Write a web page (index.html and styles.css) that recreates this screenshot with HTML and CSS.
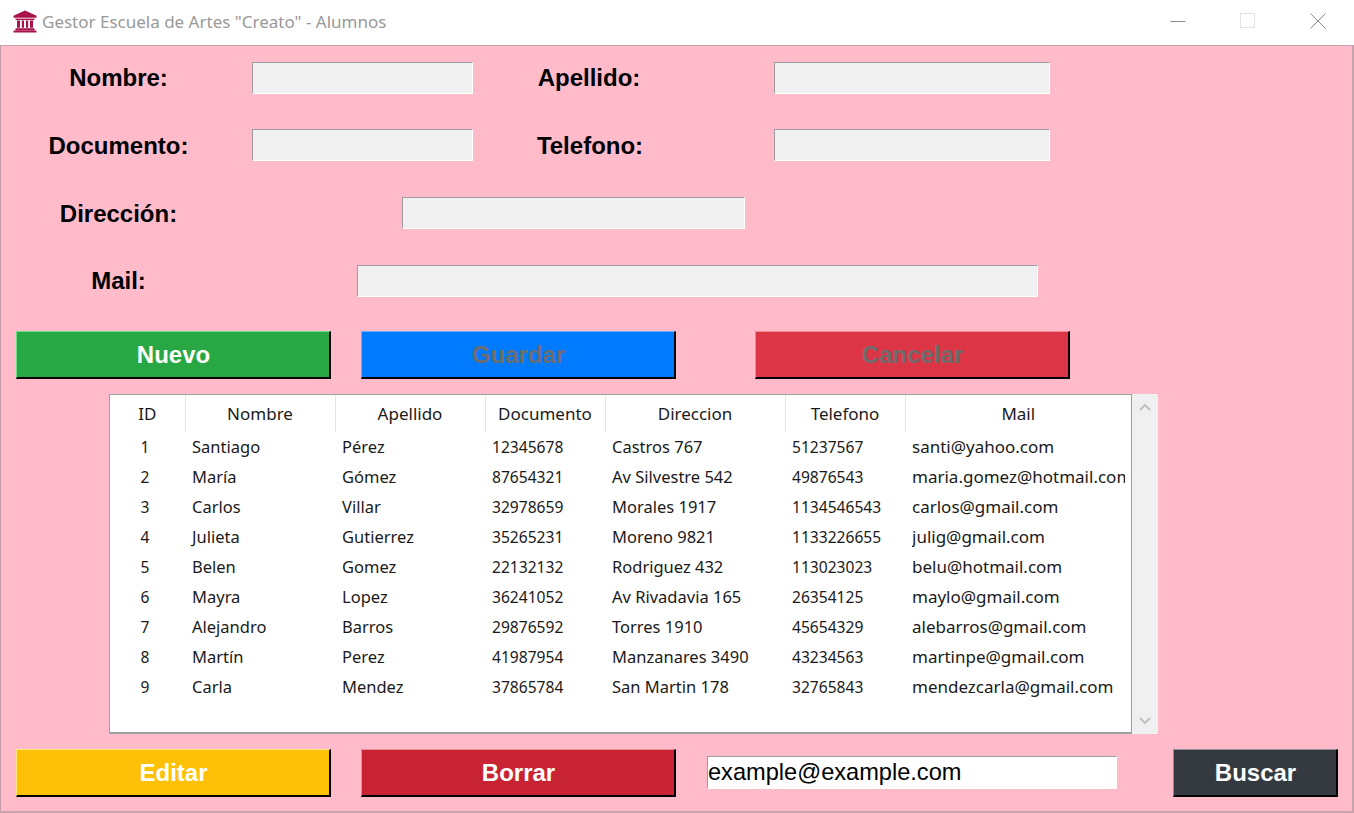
FILE: index.html
```html
<!DOCTYPE html>
<html lang="es">
<head>
<meta charset="utf-8">
<title>Gestor Escuela de Artes "Creato" - Alumnos</title>
<link rel="stylesheet" href="styles.css">
</head>
<body>
<div class="window">
  <header class="titlebar">
    <svg class="app-icon" viewBox="0 0 24 24" width="24" height="23" preserveAspectRatio="none" aria-hidden="true">
      <path d="M12 0.5 L23.5 6 V8 H0.5 V6 Z" fill="#a8144a"/>
      <path d="M2.5 9 H21.5 V10.5 H2.5 Z" fill="#a8144a"/>
      <path d="M4 11 H7 V18.5 H4 Z M8.8 11 H11 V18.5 H8.8 Z M13 11 H15.2 V18.5 H13 Z M17 11 H20 V18.5 H17 Z" fill="#a8144a"/>
      <path d="M2.5 19 H21.5 V21 H2.5 Z M0.5 21.3 H23.5 V23.5 H0.5 Z" fill="#a8144a"/>
    </svg>
    <span class="title">Gestor Escuela de Artes "Creato" - Alumnos</span>
    <div class="controls">
      <svg class="ctl ctl-min" viewBox="0 0 16 16" width="16" height="16" aria-hidden="true"><path d="M0.5 8.5 H15.5" stroke="#8a8a8a" stroke-width="1"/></svg>
      <svg class="ctl ctl-max" viewBox="0 0 16 16" width="16" height="16" aria-hidden="true"><rect x="0.5" y="0.5" width="14" height="14" fill="none" stroke="#e2e2e2"/></svg>
      <svg class="ctl ctl-close" viewBox="0 0 16 16" width="16" height="16" aria-hidden="true"><path d="M0.5 0.5 L15.5 15.5 M15.5 0.5 L0.5 15.5" stroke="#8a8a8a" stroke-width="1"/></svg>
    </div>
  </header>

  <main class="content">
    <div class="row row-1">
      <label class="label label-main">Nombre:</label>
      <input class="field field-short" type="text">
      <label class="label label-second">Apellido:</label>
      <input class="field field-second" type="text">
    </div>
    <div class="row row-2">
      <label class="label label-main">Documento:</label>
      <input class="field field-short" type="text">
      <label class="label label-second">Telefono:</label>
      <input class="field field-second" type="text">
    </div>
    <div class="row row-3">
      <label class="label label-main">Dirección:</label>
      <input class="field field-address" type="text">
    </div>
    <div class="row row-4">
      <label class="label label-main">Mail:</label>
      <input class="field field-mail" type="text">
    </div>

    <div class="actions actions-top">
      <button class="btn btn-green">Nuevo</button>
      <button class="btn btn-blue btn-off">Guardar</button>
      <button class="btn btn-red btn-off">Cancelar</button>
    </div>

    <div class="tree-wrap">
      <div class="tree">
        <table class="grid">
          <colgroup>
            <col class="c-id"><col class="c-name"><col class="c-name"><col class="c-doc"><col class="c-dir"><col class="c-doc"><col class="c-mail">
          </colgroup>
          <thead>
            <tr><th>ID</th><th>Nombre</th><th>Apellido</th><th>Documento</th><th>Direccion</th><th>Telefono</th><th>Mail</th></tr>
          </thead>
          <tbody>
            <tr><td>1</td><td>Santiago</td><td>Pérez</td><td>12345678</td><td>Castros 767</td><td>51237567</td><td><span class="clip">santi@yahoo.com</span></td></tr>
            <tr><td>2</td><td>María</td><td>Gómez</td><td>87654321</td><td>Av Silvestre 542</td><td>49876543</td><td><span class="clip">maria.gomez@hotmail.com</span></td></tr>
            <tr><td>3</td><td>Carlos</td><td>Villar</td><td>32978659</td><td>Morales 1917</td><td>1134546543</td><td><span class="clip">carlos@gmail.com</span></td></tr>
            <tr><td>4</td><td>Julieta</td><td>Gutierrez</td><td>35265231</td><td>Moreno 9821</td><td>1133226655</td><td><span class="clip">julig@gmail.com</span></td></tr>
            <tr><td>5</td><td>Belen</td><td>Gomez</td><td>22132132</td><td>Rodriguez 432</td><td>113023023</td><td><span class="clip">belu@hotmail.com</span></td></tr>
            <tr><td>6</td><td>Mayra</td><td>Lopez</td><td>36241052</td><td>Av Rivadavia 165</td><td>26354125</td><td><span class="clip">maylo@gmail.com</span></td></tr>
            <tr><td>7</td><td>Alejandro</td><td>Barros</td><td>29876592</td><td>Torres 1910</td><td>45654329</td><td><span class="clip">alebarros@gmail.com</span></td></tr>
            <tr><td>8</td><td>Martín</td><td>Perez</td><td>41987954</td><td>Manzanares 3490</td><td>43234563</td><td><span class="clip">martinpe@gmail.com</span></td></tr>
            <tr><td>9</td><td>Carla</td><td>Mendez</td><td>37865784</td><td>San Martin 178</td><td>32765843</td><td><span class="clip">mendezcarla@gmail.com</span></td></tr>
          </tbody>
        </table>
      </div>
      <div class="scrollbar">
        <svg viewBox="0 0 12 8" width="12" height="8" aria-hidden="true"><path d="M1 7 L6 2 L11 7" fill="none" stroke="#c2c2c2" stroke-width="2"/></svg>
        <svg viewBox="0 0 12 8" width="12" height="8" aria-hidden="true"><path d="M1 1 L6 6 L11 1" fill="none" stroke="#c2c2c2" stroke-width="2"/></svg>
      </div>
    </div>

    <div class="actions actions-bottom">
      <button class="btn btn-yellow">Editar</button>
      <button class="btn btn-crimson">Borrar</button>
      <input class="search" type="text" value="example@example.com">
      <button class="btn btn-dark">Buscar</button>
    </div>
  </main>
</div>
</body>
</html>
```
FILE: styles.css
```css
* { box-sizing: border-box; }

html, body {
  margin: 0;
  height: 813px;
  overflow: hidden;
}

.window {
  width: 1354px;
  height: 813px;
  display: flex;
  flex-direction: column;
  font-family: "Liberation Sans", Arial, sans-serif;
}

.titlebar {
  height: 45px;
  background: #ffffff;
  display: flex;
  align-items: center;
  padding: 0 28px 3px 13px;
  flex: none;
}

.app-icon { flex: none; }

.title {
  margin-left: 5px;
  font-family: "Noto Sans", sans-serif;
  font-size: 17px;
  color: #999999;
}

.controls {
  margin-left: auto;
  display: flex;
  align-items: center;
  gap: 54px;
}

.content {
  flex: 1;
  background: #ffbbc9;
  border-top: 1px solid #c9a2ad;
  border-left: 1px solid #c49aa6;
  border-right: 2px solid #c9a2ad;
  border-bottom: 2px solid #c9a2ad;
  padding: 16px 0 0 15px;
}

.row {
  display: flex;
  align-items: center;
  height: 32px;
  margin-left: -15px;
}

.row-1 { margin-bottom: 35px; }
.row-2 { margin-bottom: 36px; }
.row-3 { margin-bottom: 36px; }
.row-4 { margin-bottom: 34px; }

.row-2 .label, .row-3 .label { padding-top: 2px; }

.label {
  font-size: 24px;
  font-weight: bold;
  color: #000000;
  text-align: center;
  white-space: nowrap;
}

.label-main { width: 235px; flex: none; }
.label-second { width: 236px; flex: none; }

.field {
  height: 32px;
  background: #f0f0f0;
  border: 1px solid;
  border-color: #a09b9d #ffffff #ffffff #a09b9d;
  padding: 0;
  flex: none;
}

.field-short { width: 221px; margin-left: 16px; }
.field-second { width: 276px; margin-left: 67px; }
.row-1 .label-second { margin-left: -2px; }
.row-2 .label-second { margin-left: -1px; }
.row-2 .field-second { margin-left: 66px; }
.field-address { width: 343px; margin-left: 166px; }
.field-mail { width: 681px; margin-left: 121px; }

.actions {
  display: flex;
  align-items: center;
  height: 48px;
}

.btn {
  width: 315px;
  height: 48px;
  flex: none;
  font-family: "Liberation Sans", Arial, sans-serif;
  font-size: 24px;
  font-weight: bold;
  color: #ffffff;
  border-style: solid;
  border-width: 1px 2px 2px 1px;
  padding: 0 0 0 1px;
}

.btn + .btn { margin-left: 30px; }
.actions-top .btn-red { margin-left: 79px; }

.btn-off { color: #6d6d6d; }

.btn-green { background: #28a745; border-color: #6fdc8a #000000 #000000 #6fdc8a; }
.btn-blue { background: #007bff; border-color: #66b0ff #000000 #000000 #66b0ff; }
.btn-red { background: #dc3545; border-color: #ee8a94 #000000 #000000 #ee8a94; }
.btn-yellow { background: #ffc107; border-color: #ffe680 #000000 #000000 #ffe680; }
.btn-crimson { background: #c82333; border-color: #e88a93 #000000 #000000 #e88a93; }
.btn-dark { background: #343a40; border-color: #8a9097 #000000 #000000 #8a9097; width: 165px; }

.tree-wrap {
  display: flex;
  margin: 15px 0 15px 93px;
  height: 340px;
}

.tree {
  width: 1023px;
  height: 340px;
  background: #ffffff;
  border: 1px solid #a09ea0;
  border-bottom-width: 2px;
  overflow: hidden;
  flex: none;
}

.grid {
  border-collapse: collapse;
  table-layout: fixed;
  width: 1021px;
  font-family: "Noto Sans", sans-serif;
  font-size: 16.5px;
  color: #1a1a1a;
}

.c-id { width: 75px; }
.c-name { width: 150px; }
.c-doc { width: 120px; }
.c-dir { width: 180px; }
.c-mail { width: 226px; }

.grid th {
  height: 37px;
  padding: 0 0 1px;
  font-size: 17px;
  font-weight: normal;
  text-align: center;
  border-right: 1px solid #e5e5e5;
  white-space: nowrap;
}

.grid th:last-child { border-right: 0; }

.grid td {
  height: 30px;
  padding: 0 0 2px 7px;
  white-space: nowrap;
  overflow: hidden;
}

.grid td:nth-child(1),
.grid td:nth-child(4),
.grid td:nth-child(6) { font-size: 15.6px; padding-bottom: 0; }

.grid td:last-child { font-size: 17px; }

.grid td:first-child { padding-left: 0; padding-right: 5px; text-align: center; }

.clip {
  display: block;
  width: 213px;
  overflow: hidden;
}

.scrollbar {
  width: 26px;
  height: 340px;
  background: #f0f0f0;
  display: flex;
  flex-direction: column;
  align-items: center;
  justify-content: space-between;
  padding: 9px 0;
  flex: none;
}

.search {
  width: 410px;
  height: 33px;
  margin: 0 0 2px 31px;
  flex: none;
  background: #ffffff;
  border: 1px solid;
  border-color: #a09b9d #ffffff #ffffff #a09b9d;
  padding: 1px 0 0;
  font-family: "Liberation Sans", Arial, sans-serif;
  font-size: 23.6px;
  color: #000000;
}

.actions-bottom .btn-dark { margin-left: 56px; }
```
